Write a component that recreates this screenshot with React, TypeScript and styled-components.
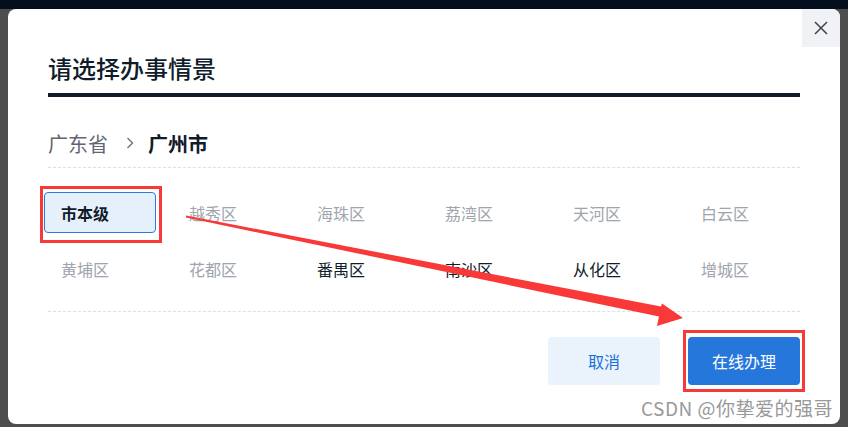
import * as React from 'react';
import styled, { createGlobalStyle } from 'styled-components';

const GlobalStyle = createGlobalStyle`
  html, body {
    margin: 0;
    padding: 0;
    width: 848px;
    height: 427px;
    overflow: hidden;
    background: #4d4d4d;
    font-family: "Noto Sans CJK SC", "Noto Sans", sans-serif;
  }
`;

const Page = styled.div`
  width: 848px;
  height: 427px;
  position: relative;
  background: #4d4d4d;
`;

const TopBar = styled.div`
  height: 9px;
  background: #030f1d;
`;

const Modal = styled.div`
  position: absolute;
  left: 8px;
  top: 9px;
  width: 832px;
  height: 415px;
  box-sizing: border-box;
  padding: 0 40px;
  background: #fff;
  border-radius: 8px;
  display: flex;
  flex-direction: column;
`;

const CloseButton = styled.button`
  position: absolute;
  top: 0;
  right: 0;
  width: 38px;
  height: 38px;
  border: none;
  padding: 0;
  background: #f0f2f5;
  border-top-right-radius: 8px;
  display: flex;
  align-items: center;
  justify-content: center;
  color: #3a4350;
`;

const Title = styled.h2`
  margin: 42px 0 0;
  padding-bottom: 8px;
  border-bottom: 4px solid #111c2b;
  font-size: 24px;
  line-height: 34px;
  font-weight: 500;
  color: #111c2b;
`;

const Breadcrumb = styled.div`
  margin-top: 32px;
  height: 28px;
  padding-bottom: 10px;
  border-bottom: 1px dashed #dcdfe3;
  display: flex;
  align-items: center;
  font-size: 20px;
`;

const Crumb = styled.span<{ $current?: boolean }>`
  color: ${p => (p.$current ? '#111c2b' : '#5f6670')};
  font-weight: ${p => (p.$current ? 700 : 400)};
`;

const Chevron = styled.span`
  display: flex;
  align-items: center;
  margin: 0 14px 0 18px;
  color: #6b7280;
`;

const Grid = styled.div`
  padding: 24px 0 22px;
  border-bottom: 1px dashed #dcdfe3;
  display: grid;
  grid-template-columns: repeat(6, 112px);
  grid-auto-rows: 41px;
  column-gap: 16px;
  row-gap: 15px;
`;

type ItemState = 'selected' | 'active' | 'disabled';

const Item = styled.div<{ $state: ItemState }>`
  width: 112px;
  margin-left: -4px;
  box-sizing: border-box;
  padding-left: 16px;
  display: flex;
  align-items: center;
  font-size: 16px;
  border-radius: 4px;
  border: 1px solid ${p => (p.$state === 'selected' ? '#2a7ae2' : 'transparent')};
  background: ${p => (p.$state === 'selected' ? '#e6f0fb' : 'transparent')};
  color: ${p => (p.$state === 'disabled' ? '#a0a5ad' : '#111c2b')};
  font-weight: ${p => (p.$state === 'selected' ? 700 : 400)};
`;

const Footer = styled.div`
  padding-top: 25px;
  display: flex;
  justify-content: flex-end;
  gap: 28px;
`;

const Button = styled.button<{ $primary?: boolean }>`
  width: 112px;
  height: 48px;
  border: none;
  border-radius: 4px;
  font-family: inherit;
  font-size: 16px;
  background: ${p => (p.$primary ? '#2677dc' : '#eaf2fb')};
  color: ${p => (p.$primary ? '#fff' : '#1a6fd8')};
`;

const Watermark = styled.div`
  position: absolute;
  left: 641px;
  top: 396px;
  font-size: 19px;
  line-height: 24px;
  letter-spacing: 0.5px;
  color: #999;
  text-shadow: 0 0 1px #fff, 1px 1px 0 rgba(255, 255, 255, 0.8);
  white-space: nowrap;
`;

const Mark = styled.div<{ $x: number; $y: number; $w: number; $h: number }>`
  position: absolute;
  left: ${p => p.$x}px;
  top: ${p => p.$y}px;
  width: ${p => p.$w}px;
  height: ${p => p.$h}px;
  box-sizing: border-box;
  border: 3px solid #f93838;
  pointer-events: none;
`;

const ArrowLayer = styled.svg`
  position: absolute;
  left: 0;
  top: 0;
  pointer-events: none;
`;

const districts: { name: string; state: ItemState }[] = [
  { name: '市本级', state: 'selected' },
  { name: '越秀区', state: 'disabled' },
  { name: '海珠区', state: 'disabled' },
  { name: '荔湾区', state: 'disabled' },
  { name: '天河区', state: 'disabled' },
  { name: '白云区', state: 'disabled' },
  { name: '黄埔区', state: 'disabled' },
  { name: '花都区', state: 'disabled' },
  { name: '番禺区', state: 'active' },
  { name: '南沙区', state: 'active' },
  { name: '从化区', state: 'active' },
  { name: '增城区', state: 'disabled' },
];

const App: React.FC = () => {
  return (
    <Page>
      <GlobalStyle />
      <TopBar />
      <Modal>
        <CloseButton aria-label="关闭">
          <svg width="16" height="16" viewBox="0 0 16 16">
            <path d="M2 2 L14 14 M14 2 L2 14" stroke="currentColor" strokeWidth="1.5" fill="none" />
          </svg>
        </CloseButton>
        <Title>请选择办事情景</Title>
        <Breadcrumb>
          <Crumb>广东省</Crumb>
          <Chevron>
            <svg width="8" height="12" viewBox="0 0 8 12">
              <path d="M1.5 1 L6.5 6 L1.5 11" stroke="currentColor" strokeWidth="1.4" fill="none" />
            </svg>
          </Chevron>
          <Crumb $current>广州市</Crumb>
        </Breadcrumb>
        <Grid>
          {districts.map(d => (
            <Item key={d.name} $state={d.state}>{d.name}</Item>
          ))}
        </Grid>
        <Footer>
          <Button>取消</Button>
          <Button $primary>在线办理</Button>
        </Footer>
      </Modal>
      <Watermark>CSDN @你挚爱的强哥</Watermark>
      <Mark $x={40} $y={186} $w={122} $h={57} />
      <Mark $x={683} $y={330} $w={122} $h={62} />
      <ArrowLayer width="848" height="427" viewBox="0 0 848 427">
        <polygon
          points="186,215.5 661,306.5 662,303.5 683,318 657,326 659,316.5 186,217.5"
          fill="#f93838"
        />
      </ArrowLayer>
    </Page>
  );
};

export default App;
